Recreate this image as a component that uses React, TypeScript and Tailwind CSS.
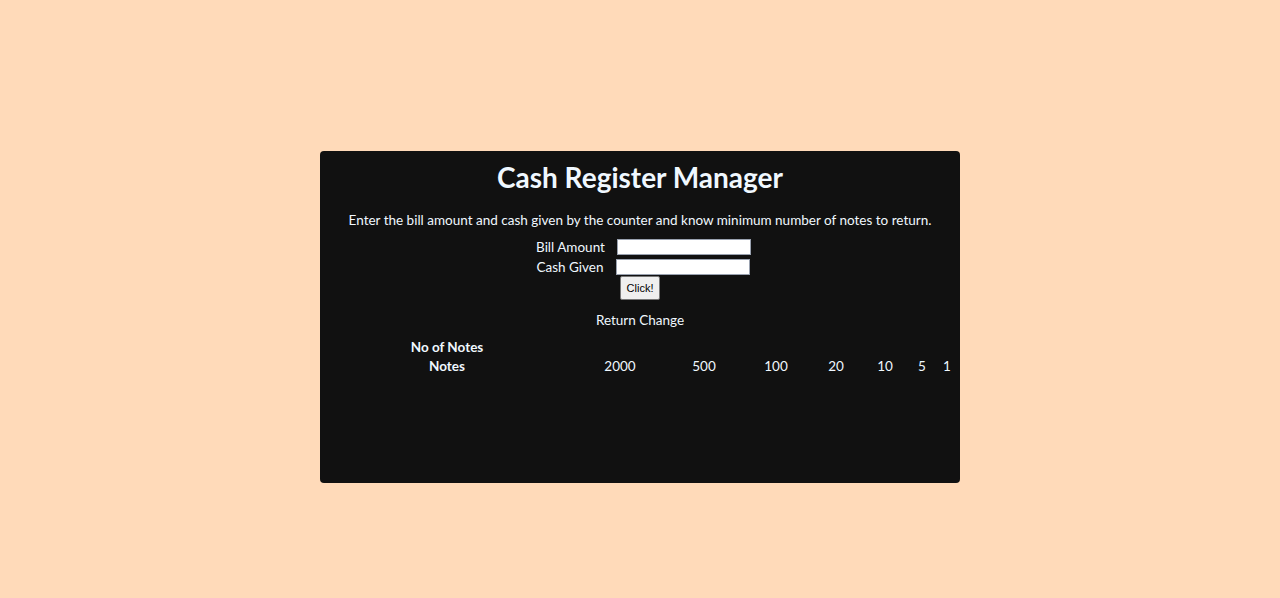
import React from "react";

const notes = [
  { v: "2000", w: "w-[40px]", ml: "ml-[93px]" },
  { v: "500", w: "w-[40px]", ml: "ml-[44px]" },
  { v: "100", w: "w-[40px]", ml: "ml-[32px]" },
  { v: "20", w: "w-[30px]", ml: "ml-[25px]" },
  { v: "10", w: "w-[30px]", ml: "ml-[19px]" },
  { v: "5", w: "w-[20px]", ml: "ml-[12px]" },
  { v: "1", w: "w-[16px]", ml: "ml-[7px]" },
];

const App = () => {
  return (
    <div className="min-h-[598px] bg-[#ffdab9] flex justify-center pt-[151px] font-['Lato',sans-serif] text-[#f0f8ff]">
      <div className="w-[640px] h-[332px] bg-[#111111] rounded-[4px] flex flex-col">
        <h1 className="text-[28px] font-bold text-center mt-[9px] leading-[34px]">Cash Register Manager</h1>
        <p className="text-[13.5px] text-center mt-[17px] leading-[18px]">
          Enter the bill amount and cash given by the counter and know minimum number of notes to return.
        </p>
        <div className="flex flex-col items-center mt-[8px] text-[13.5px]">
          <div className="flex items-center h-[20px] pl-[7px]">
            <label className="mr-[12px]">Bill Amount</label>
            <input className="w-[134px] h-[16px] bg-white border border-gray-400" />
          </div>
          <div className="flex items-center h-[20px] pl-[6px]">
            <label className="mr-[12px]">Cash Given</label>
            <input className="w-[134px] h-[16px] bg-white border border-gray-400" />
          </div>
          <button className="-mt-[1px] h-[24px] px-[6px] bg-[#efefef] border border-[#767676] rounded-[2px] text-black text-[11px] font-['Liberation_Sans',sans-serif]">
            Click!
          </button>
          <div className="mt-[11px] leading-[18px]">Return Change</div>
        </div>
        <div className="mt-[9px] text-[13.5px] leading-[19px]">
          <div className="pl-[67px] flex">
            <div className="w-[120px] text-center font-bold">No of Notes</div>
          </div>
          <div className="pl-[67px] flex">
            <div className="w-[120px] text-center font-bold">Notes</div>
            {notes.map((n) => (
              <div key={n.v} className={`${n.w} ${n.ml} text-center`}>
                {n.v}
              </div>
            ))}
          </div>
        </div>
      </div>
    </div>
  );
};

export default App;
